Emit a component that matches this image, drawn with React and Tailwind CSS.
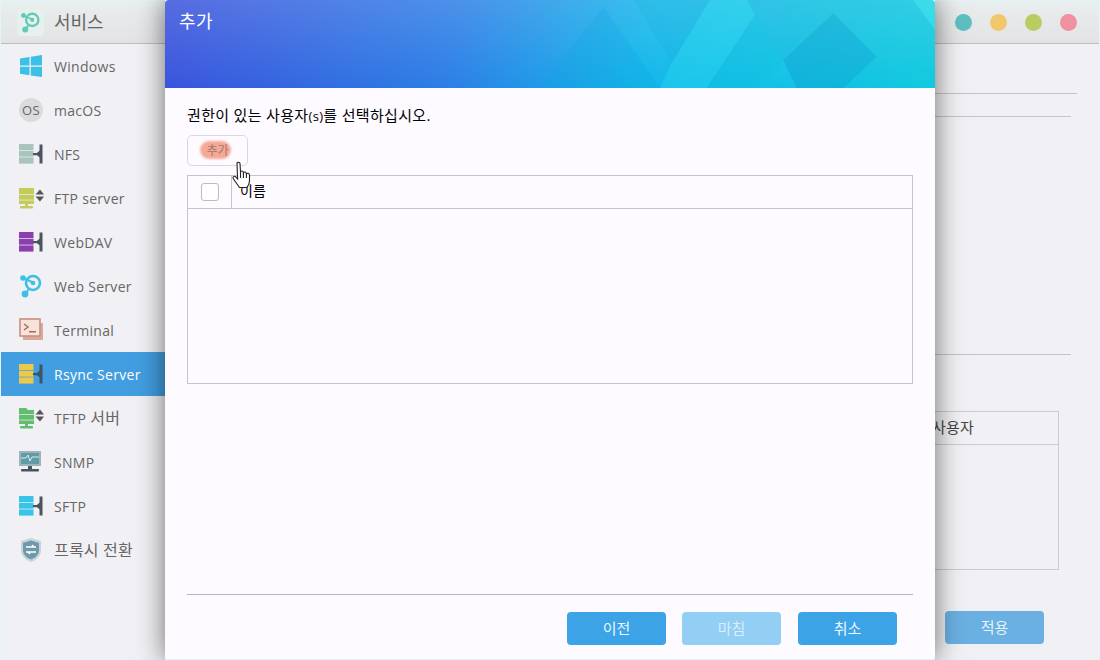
import React from "react";

const ServerIcon = ({ color, dark = "#4a5560" }) => (
  <svg width="26" height="24" viewBox="0 0 26 24">
    <rect x="0" y="2" width="14.5" height="6" fill={color} />
    <rect x="0" y="8.7" width="14.5" height="6" fill={color} />
    <rect x="0" y="15.4" width="14.5" height="6.2" fill={color} />
    <rect x="14" y="11" width="8" height="2.2" fill={dark} />
    <path d="M16.5 12 L21.5 8 V16 Z" fill={dark} />
    <rect x="20.5" y="2.5" width="3" height="19" fill={dark} />
  </svg>
);

const FtpIcon = ({ color, folder }) => (
  <svg width="26" height="24" viewBox="0 0 26 24">
    {folder && <path d="M0 2 H7 L9 4 H15 V8 H0 Z" fill={color} />}
    {!folder && <rect x="0" y="2" width="15" height="6" fill={color} />}
    <rect x="0" y="8.7" width="15" height="5" fill={color} />
    <rect x="0" y="14.4" width="15" height="3.6" fill={color} />
    <rect x="6" y="18" width="3" height="2" fill={color} />
    <rect x="1" y="20" width="13" height="2.5" rx="1" fill={color} />
    <path d="M16.5 8.5 L21 3.5 L25 8.5 Z" fill="#555" />
    <path d="M16.5 10.5 H25 L21 15.5 Z" fill="#555" />
  </svg>
);

const NodesIcon = ({ color, size = 24 }) => (
  <svg width={size} height={size} viewBox="0 0 24 24" fill="none" stroke={color}>
    <circle cx="14" cy="9" r="7" strokeWidth="2.6" />
    <circle cx="14" cy="9" r="2.3" fill={color} stroke="none" />
    <circle cx="4" cy="4" r="2.8" fill={color} stroke="none" />
    <circle cx="6" cy="20" r="3.4" fill={color} stroke="none" />
    <path d="M4 4 L13 8 M6 20 L10 15" strokeWidth="2" />
  </svg>
);

const WindowsIcon = () => (
  <svg width="24" height="24" viewBox="0 0 24 24" fill="#3cc0e6">
    <path d="M1 4.5 L10.5 3 V11.5 H1 Z" />
    <path d="M11.8 2.8 L23 1 V11.5 H11.8 Z" />
    <path d="M1 12.8 H10.5 V21.2 L1 19.8 Z" />
    <path d="M11.8 12.8 H23 V23 L11.8 21.4 Z" />
  </svg>
);

const MacIcon = () => (
  <div className="w-[24px] h-[24px] rounded-full bg-[#dcdadd] flex items-center justify-center text-[13px] leading-none text-[#666]">
    OS
  </div>
);

const TerminalIcon = () => (
  <svg width="26" height="24" viewBox="0 0 26 24">
    <rect x="4" y="5" width="20" height="17" fill="#d9a99b" />
    <rect x="1" y="1" width="20" height="17" fill="#f5e3dc" stroke="#c88f80" strokeWidth="1.6" />
    <path d="M5 6 L9 9 L5 12" fill="none" stroke="#a8695a" strokeWidth="1.4" />
    <rect x="10" y="13" width="7" height="1.5" fill="#a8695a" />
  </svg>
);

const SnmpIcon = () => (
  <svg width="26" height="24" viewBox="0 0 26 24">
    <rect x="0" y="1" width="22" height="15" fill="#9db5b8" />
    <rect x="2" y="3" width="18" height="11" fill="#5f9ca6" />
    <path d="M2 8 H7 L9 5 L11 11 L13 7 H20" fill="none" stroke="#d8ecee" strokeWidth="1" />
    <rect x="9" y="16" width="4" height="4" fill="#4a5560" />
    <rect x="2" y="19" width="18" height="2.5" rx="1" fill="#4a5560" />
  </svg>
);

const ShieldIcon = () => (
  <svg width="24" height="26" viewBox="0 0 24 26">
    <path d="M12 1 L22 4 V13 C22 19 17 23 12 25 C7 23 2 19 2 13 V4 Z" fill="#c9d3d8" />
    <path d="M12 3.5 L20 6 V13 C20 18 16 21 12 22.5 C8 21 4 18 4 13 V6 Z" fill="#6b9aa8" />
    <path d="M7 10 H17 M13 8 L15 10 M7 15 H17 M11 17 L9 15" stroke="#fff" strokeWidth="1.5" fill="none" />
  </svg>
);

const Ko = ({ children }) => <span className="text-[16px] tracking-[0.2px]">{children}</span>;

const menu = [
  { id: "windows", label: "Windows", icon: <WindowsIcon /> },
  { id: "macos", label: "macOS", icon: <MacIcon /> },
  { id: "nfs", label: "NFS", icon: <ServerIcon color="#a9c4bd" /> },
  { id: "ftp", label: "FTP server", icon: <FtpIcon color="#c3cb5a" /> },
  { id: "webdav", label: "WebDAV", icon: <ServerIcon color="#8b3fae" /> },
  { id: "web", label: "Web Server", icon: <NodesIcon color="#3cc0e6" /> },
  { id: "terminal", label: "Terminal", icon: <TerminalIcon /> },
  { id: "rsync", label: "Rsync Server", icon: <ServerIcon color="#ecc94b" dark="#3d5568" />, active: true },
  { id: "tftp", label: <>TFTP <Ko>서버</Ko></>, icon: <FtpIcon color="#62bd6e" folder /> },
  { id: "snmp", label: "SNMP", icon: <SnmpIcon /> },
  { id: "sftp", label: "SFTP", icon: <ServerIcon color="#38c3e8" /> },
  { id: "proxy", label: <Ko>프록시 전환</Ko>, icon: <ShieldIcon /> },
];

const Background = () => (
  <div className="w-full h-full flex flex-col">
    <div className="h-[43px] shrink-0 flex items-center bg-gradient-to-b from-[#e9eeee] to-[#e3e3e4] border-b border-[#bdbcc0]">
      <div className="ml-[16px] w-[27px] h-[27px] rounded-[4px] bg-[#e6f0ec] flex items-center justify-center">
        <NodesIcon color="#62c9b9" size={21} />
      </div>
      <span className="ml-[10px] text-[18px] text-[#666]">서비스</span>
      <div className="ml-auto mr-[22px] flex gap-[18px]">
        <span className="w-[17px] h-[17px] rounded-full bg-[#5fbfc0]" />
        <span className="w-[17px] h-[17px] rounded-full bg-[#f2c76b]" />
        <span className="w-[17px] h-[17px] rounded-full bg-[#b9cc63]" />
        <span className="w-[17px] h-[17px] rounded-full bg-[#ef919e]" />
      </div>
    </div>
    <div className="flex-1 flex bg-[#f1f0f4]">
      <div className="w-[164px] shrink-0">
        {menu.map((item) => (
          <div
            key={item.id}
            className={`h-[44px] flex items-center text-[14px] tracking-[0.3px] ${
              item.active ? "bg-[#429ee0] text-white" : "text-[#666]"
            }`}
          >
            <div className="w-[53px] pl-[18px] shrink-0 flex items-center">{item.icon}</div>
            <span>{item.label}</span>
          </div>
        ))}
      </div>
      <div className="flex-1 relative flex flex-col pr-[22px] pl-[20px]">
        <div className="mt-[49px] border-t border-[#c4c3c8]" />
        <div className="mt-[22px] mr-[6px] border-t border-[#c4c3c8]" />
        <div className="mt-[237px] mr-[6px] border-t border-[#c4c3c8]" />
        <div className="mt-[56px] mr-[18px] h-[159px] border border-[#cbcace]">
          <div className="h-[33px] border-b border-[#cbcace] flex items-center justify-end pr-[84px] pb-[2px] text-[15px] tracking-[0.2px] text-[#444]">
            사용자
          </div>
        </div>
        <div className="mt-[41px] flex justify-end mr-[33px]">
          <button className="w-[99px] h-[33px] rounded-[4px] bg-[#6bb0e2] text-[#e8f3fb] text-[15px]">적용</button>
        </div>
      </div>
    </div>
  </div>
);

// shapes are traced in 3x crop coordinates, so the dialog spans x -1185..1125
const HeaderArt = () => (
  <svg className="absolute inset-0 w-full h-full" viewBox="-1185 0 2310 264" preserveAspectRatio="none">
    <polygon points="130,20 -60,264 300,264" fill="#0fa4e0" opacity="0.22" />
    <polygon points="220,0 450,0 335,190" fill="#12a8d6" opacity="0.16" />
    <polygon points="450,0 560,0 585,45 440,264 300,264 335,190" fill="#34e6f0" opacity="0.28" />
    <polygon points="585,45 670,180 590,264 440,264" fill="#0cc0dc" opacity="0.3" />
    <polygon points="560,0 1060,0 1125,90 1125,264 710,264 670,180 585,45" fill="#0fa8d0" opacity="0.12" />
    <polygon points="820,40 670,180 710,264 850,264 950,170" fill="#0790c4" opacity="0.25" />
    <polygon points="1060,0 1125,0 1125,90" fill="#4ae6f0" opacity="0.4" />
  </svg>
);

const DialogButton = ({ children, disabled, className = "" }) => (
  <button
    className={`w-[99px] h-[33px] rounded-[4px] text-[15px] ${
      disabled ? "bg-[#93cff5] text-[#d8eefc]" : "bg-[#3ba3e6] text-[#eef8ff]"
    } ${className}`}
  >
    {children}
  </button>
);

const HandCursor = () => (
  <svg className="absolute left-[232px] top-[161px]" width="20" height="28" viewBox="0 0 20 28" fill="#fff" stroke="#222" strokeWidth="1.1">
    <path d="M5 2.5 C5 .8 8 .8 8 2.5 L8.5 11 C8.7 9.6 11 9.6 11.2 11 L11.5 12 C11.7 10.6 14 10.6 14.2 12.2 L14.5 13 C14.8 11.8 17.4 12 17.5 14 L17.5 20 C17.5 23 16 25 15 26.5 H7.5 L1.5 18 C.2 16 2.2 14.4 3.8 16 L5.6 18 Z" />
    <path d="M8.5 11 V17 M11.4 12 V17 M14.4 13 V17" fill="none" />
  </svg>
);

const Dialog = () => (
  <div className="absolute left-[165px] top-0 bottom-[1px] w-[770px] rounded-[4px] overflow-hidden bg-[#fdfbff] flex flex-col">
    <div className="relative h-[88px] shrink-0 bg-[linear-gradient(100deg,#3a52dc_0%,#2b7fe6_38%,#12b6ea_62%,#12cfe2_100%)]">
      <div className="absolute inset-0 bg-gradient-to-b from-white/15 to-transparent" />
      <HeaderArt />
      <div className="relative pl-[14px] pt-[8px] text-[18px] tracking-[0.4px] leading-[26px] text-white">추가</div>
    </div>
    <div className="flex-1 px-[22px] flex flex-col">
      <div className="mt-[17px] h-[20px] text-[15px] tracking-[0.33px] leading-[20px] text-black whitespace-nowrap">
        권한이 있는 사용자<span className="text-[13px]">(s)</span>를 선택하십시오.
      </div>
      <div className="mt-[10px]">
        <button className="relative w-[61px] h-[31px] rounded-[5px] border border-[#d9d8dc] text-[12px] text-[#a07a70]">
          <span className="absolute left-[12px] top-[5px] w-[31px] h-[18px] rounded-full bg-[#f6a896] blur-[1px]" />
          <span className="relative">추가</span>
        </button>
      </div>
      <div className="mt-[9px] h-[209px] border border-[#c6c5ca]">
        <div className="h-[33px] flex items-center border-b border-[#c6c5ca]">
          <div className="w-[44px] h-full border-r border-[#c6c5ca] flex items-center justify-center">
            <span className="w-[18px] h-[18px] rounded-[3px] border border-[#bcbbc0] bg-white" />
          </div>
          <span className="ml-[8px] pb-[3px] text-[14px] text-black">이름</span>
        </div>
      </div>
      <div className="mt-auto border-t border-[#b5b4ba] h-[65px] flex items-start justify-end gap-[16px] pt-[17px] pr-[16px]">
        <DialogButton>이전</DialogButton>
        <DialogButton disabled>마침</DialogButton>
        <DialogButton className="ml-[1px]">취소</DialogButton>
      </div>
    </div>
  </div>
);

const App = () => (
  <div className="relative w-[1100px] h-[660px] overflow-hidden bg-[#e2f4fb] p-[1px] font-['Open_Sans','Noto_Sans_CJK_KR',sans-serif]">
    <Background />
    <div className="absolute left-[165px] top-0 bottom-0 w-[770px] shadow-[0_0_26px_rgba(0,0,0,0.55)]" />
    <Dialog />
    <HandCursor />
  </div>
);

export default App;
